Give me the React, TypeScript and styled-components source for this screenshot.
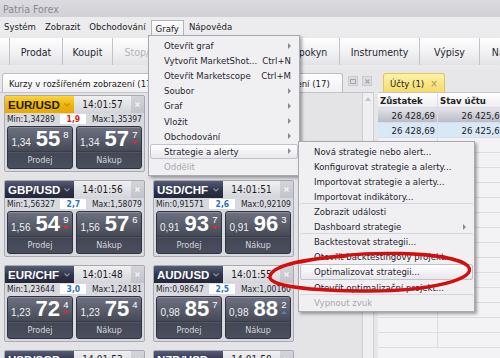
import React from "react";
import styled, { createGlobalStyle } from "styled-components";

const UI = `"DejaVu Sans Condensed", "Liberation Sans", sans-serif`;
const NUM = `"Liberation Sans", Arial, sans-serif`;

const GlobalStyle = createGlobalStyle`
  html, body { margin: 0; padding: 0; background: #e7e7ea; }
  body { font-family: ${UI}; color: #222; }
  * { box-sizing: border-box; }
`;

const Window = styled.div`
  position: relative;
  width: 500px;
  height: 358px;
  overflow: hidden;
  display: flex;
  flex-direction: column;
  background: #e7e7ea;
`;

const TitleBar = styled.div`
  flex: none;
  height: 17px;
  display: flex;
  align-items: center;
  padding-left: 3px;
  background: linear-gradient(#dcdce0, #d0d0d5);
  color: #8a8a97;
  font-size: 10.5px;
`;

const MenuBar = styled.div`
  position: relative;
  z-index: 5;
  flex: none;
  height: 19px;
  display: flex;
  background: #ececee;
  font-size: 9.5px;
`;

const MenuTitle = styled.div<{ $open?: boolean }>`
  display: flex;
  align-items: center;
  padding: 0 4px;
  margin-right: 1px;
  ${(p) =>
    p.$open &&
    `
    margin-top: 3px;
    background: linear-gradient(#fcfcfc, #f0f0f2);
    border: 1px solid #b4b4bd;
    border-bottom: none;
  `}
`;

const Dropdown = styled.div<{ $left: number; $top: number; $width: number }>`
  position: absolute;
  left: ${(p) => p.$left}px;
  top: ${(p) => p.$top}px;
  width: ${(p) => p.$width}px;
  padding: 2px 0 1px;
  background: #f0f0f2;
  border: 1px solid #a9a9b3;
  box-shadow: 2px 2px 3px rgba(0, 0, 0, 0.35);
  font-size: 9.5px;
`;

const Item = styled.div<{ $hot?: boolean; $off?: boolean; $sep?: boolean }>`
  position: relative;
  height: 15.1px;
  display: flex;
  align-items: center;
  justify-content: space-between;
  padding: 0 6px 0 13px;
  margin: 0 1px;
  color: ${(p) => (p.$off ? "#a8a8b0" : "#262630")};
  border: 1px solid transparent;
  border-radius: 2px;
  white-space: nowrap;
  ${(p) => p.$sep && `box-shadow: 0 -1px 0 #d6d6dc;`}
  ${(p) =>
    p.$hot &&
    `
    background: linear-gradient(#ffffff, #e7e7ec);
    border-color: #c2c2cb;
  `}
`;

const Arrow = styled.span`
  width: 0;
  height: 0;
  border-top: 3px solid transparent;
  border-bottom: 3px solid transparent;
  border-left: 3px solid #8a8a94;
`;

const Shortcut = styled.span`
  color: #262630;
`;

const Toolbar = styled.div`
  flex: none;
  height: 34px;
  display: flex;
  padding: 2px 0 5px;
  background: #e9e9ec;
`;

const ToolButton = styled.div<{ $w: number; $off?: boolean }>`
  flex: none;
  width: ${(p) => p.$w}px;
  display: flex;
  align-items: center;
  justify-content: center;
  border-right: 1px solid #c3c3ca;
  background: linear-gradient(#fefefe, #f1f1f3 55%, #e3e3e7);
  color: ${(p) => (p.$off ? "#b2b2ba" : "#262630")};
  font-size: 10.5px;
  white-space: nowrap;
`;

const Workspace = styled.div`
  flex: 1;
  min-height: 0;
  display: flex;
`;

const LeftPanel = styled.div`
  flex: none;
  width: 374px;
  display: flex;
  flex-direction: column;
`;

const RightPanel = styled.div`
  flex: 1;
  margin-left: 4px;
  display: flex;
  flex-direction: column;
  min-width: 0;
`;

const TabStrip = styled.div<{ $pad: number }>`
  flex: none;
  height: 23px;
  display: flex;
  align-items: flex-end;
  padding-left: ${(p) => p.$pad}px;
  border-bottom: 1px solid #c4c4cb;
`;

const Tab = styled.div<{ $w?: number; $yellow?: boolean }>`
  height: 19px;
  ${(p) => (p.$w ? `width: ${p.$w}px;` : "")}
  display: flex;
  align-items: center;
  gap: 6px;
  padding: 0 6px;
  margin-right: 2px;
  border: 1px solid ${(p) => (p.$yellow ? "#e3c65a" : "#bcbcc4")};
  border-bottom: none;
  border-radius: 3px 3px 0 0;
  background: ${(p) =>
    p.$yellow
      ? "linear-gradient(#fdf2a8, #f6da68)"
      : "linear-gradient(#ffffff, #f0f0f3)"};
  font-size: 9.5px;
  white-space: nowrap;
  overflow: hidden;
`;

const TabClose = styled.span`
  color: #a89a60;
  font-size: 10px;
`;

const WinButtons = styled.div`
  margin-left: auto;
  align-self: center;
  display: flex;
  gap: 4px;
  padding-right: 2px;
`;

const WinButton = styled.div`
  width: 10px;
  height: 10px;
  display: flex;
  align-items: center;
  justify-content: center;
  background: #dcdce0;
  border: 1px solid #cacad0;
`;

const PanelBody = styled.div`
  flex: 1;
  min-height: 0;
  display: flex;
  background: #e4e4e7;
`;

const TileGrid = styled.div`
  flex: 1;
  display: grid;
  grid-template-columns: 141px 141px;
  grid-auto-rows: 77px;
  gap: 8px;
  padding: 2px 0 0 4px;
  align-content: start;
`;

const Scrollbar = styled.div`
  flex: none;
  width: 12px;
  display: flex;
  justify-content: center;
  padding-top: 4px;
  background: #efeff1;
  border-left: 1px solid #cfcfd5;
  border-right: 1px solid #cfcfd5;
`;

const UpArrow = styled.span`
  width: 0;
  height: 0;
  border-left: 3px solid transparent;
  border-right: 3px solid transparent;
  border-bottom: 4px solid #c4c4cc;
`;

const Tile = styled.div`
  display: flex;
  flex-direction: column;
  border: 1px solid #a8a9b3;
  border-radius: 2px;
  background: #d8d9de;
  overflow: hidden;
`;

const TileHead = styled.div`
  flex: none;
  height: 17px;
  display: flex;
`;

const Pair = styled.div<{ $active?: boolean }>`
  width: 69px;
  display: flex;
  align-items: center;
  justify-content: space-between;
  padding: 0 4px 0 3px;
  background: ${(p) =>
    p.$active
      ? "linear-gradient(#fcd535, #eeb307 55%, #e7a900)"
      : "linear-gradient(#575c77, #2f3349 55%, #24273b)"};
  color: ${(p) => (p.$active ? "#1c1c1c" : "#ffffff")};
  font-family: ${NUM};
  font-weight: bold;
  font-size: 11.5px;
`;

const Time = styled.div`
  flex: 1;
  display: flex;
  align-items: center;
  justify-content: center;
  background: linear-gradient(#f0f0f2, #d4d5da);
  font-size: 10px;
  color: #1e1e24;
`;

const TileClose = styled.div`
  width: 13px;
  display: flex;
  align-items: center;
  justify-content: center;
  background: linear-gradient(#d4d5da, #c2c3ca);
`;

const Range = styled.div`
  flex: none;
  height: 12px;
  display: flex;
  align-items: center;
  justify-content: space-between;
  padding: 0 2px;
  font-size: 8.5px;
  color: #23232a;
`;

const Spread = styled.span<{ $red?: boolean }>`
  width: 26px;
  height: 10px;
  line-height: 10px;
  text-align: center;
  background: #ffffff;
  color: ${(p) => (p.$red ? "#d42020" : "#2a72c8")};
  font-weight: bold;
`;

const Quotes = styled.div`
  flex: 1;
  display: flex;
  gap: 3px;
  padding: 1px 2px 2px;
`;

const Quote = styled.div`
  flex: 1;
  display: flex;
  flex-direction: column;
  border: 1px solid #30323d;
  border-radius: 3px;
  background: linear-gradient(#6e7181, #50535f 45%, #434654 62%, #4b4e5c);
  box-shadow: inset 0 1px 0 rgba(255, 255, 255, 0.22);
`;

const PriceRow = styled.div`
  flex: none;
  height: 24px;
  display: flex;
  align-items: baseline;
  justify-content: center;
  padding-top: 1px;
  color: #ffffff;
  font-family: ${NUM};
`;

const Prefix = styled.span`
  font-size: 10px;
  margin-right: 5px;
  color: #eceef4;
`;

const Big = styled.span`
  font-size: 22px;
  line-height: 22px;
  font-weight: bold;
`;

const Pip = styled.span`
  align-self: flex-start;
  display: flex;
  flex-direction: column;
  align-items: center;
  margin-left: 3px;
  margin-top: 2px;
  font-size: 9.5px;
  line-height: 9px;
  gap: 2px;
`;

const Tick = styled.span<{ $dir: "up" | "down" }>`
  width: 0;
  height: 0;
  border-left: 3px solid transparent;
  border-right: 3px solid transparent;
  ${(p) =>
    p.$dir === "down"
      ? "border-top: 3px solid #e82a2a;"
      : "border-bottom: 3px solid #3c8de0;"}
`;

const QuoteLabel = styled.div`
  flex: 1;
  display: flex;
  align-items: center;
  justify-content: center;
  border-top: 1px solid #3a3c48;
  box-shadow: inset 0 1px 0 rgba(255, 255, 255, 0.08);
  color: #d4d6de;
  font-size: 9px;
`;

const Table = styled.div`
  flex: 1;
  background: #f3f3f5;
  font-size: 9.5px;
  overflow: hidden;
`;

const Row = styled.div<{ $kind?: "head" | "sel" | "blue" | "empty" }>`
  height: 15px;
  display: flex;
  border-bottom: 1px solid #dcdce2;
  background: ${(p) =>
    p.$kind === "head"
      ? "linear-gradient(#ffffff, #eeeef1)"
      : p.$kind === "sel"
      ? "linear-gradient(#e2e3e8, #b9bbc7)"
      : p.$kind === "blue"
      ? "#d7e8f7"
      : "#f3f3f5"};
  font-weight: ${(p) => (p.$kind === "head" ? "bold" : "normal")};
`;

const Cell = styled.div<{ $w: number; $right?: boolean }>`
  flex: none;
  width: ${(p) => p.$w}px;
  display: flex;
  align-items: center;
  justify-content: ${(p) => (p.$right ? "flex-end" : "flex-start")};
  padding: 0 2px;
  border-right: 1px solid #dcdce2;
  white-space: nowrap;
`;

const Annotation = styled.svg`
  position: absolute;
  inset: 0;
  z-index: 20;
  pointer-events: none;
`;

const XMark = ({ color = "#f4f4f6", size = 5 }: { color?: string; size?: number }) => (
  <svg width={size} height={size} viewBox="0 0 5 5">
    <path d="M0.5 0.5 L4.5 4.5 M4.5 0.5 L0.5 4.5" stroke={color} strokeWidth="1.2" />
  </svg>
);

const Chevron = ({ color }: { color: string }) => (
  <svg width="6" height="4" viewBox="0 0 6 4">
    <path d="M0.5 0.5 L3 3 L5.5 0.5" stroke={color} strokeWidth="1.1" fill="none" />
  </svg>
);

type Side = { pre: string; big: string; pip: string; tick?: "up" | "down" };
type Rate = {
  pair: string;
  time: string;
  min: string;
  max: string;
  spread: string;
  red?: boolean;
  active?: boolean;
  sell: Side;
  buy: Side;
};

const rates: Rate[] = [
  {
    pair: "EUR/USD", time: "14:01:57", min: "1,34289", max: "1,35397", spread: "1,9", red: true, active: true,
    sell: { pre: "1,34", big: "55", pip: "8" },
    buy: { pre: "1,34", big: "57", pip: "7", tick: "down" },
  },
  {
    pair: "USD/JPY", time: "14:01:57", min: "93,412", max: "94,170", spread: "2,0",
    sell: { pre: "93,", big: "85", pip: "1" },
    buy: { pre: "93,", big: "87", pip: "1" },
  },
  {
    pair: "GBP/USD", time: "14:01:56", min: "1,56327", max: "1,58079", spread: "2,7",
    sell: { pre: "1,56", big: "54", pip: "9", tick: "down" },
    buy: { pre: "1,56", big: "57", pip: "6" },
  },
  {
    pair: "USD/CHF", time: "14:01:51", min: "0,91571", max: "0,92109", spread: "2,6",
    sell: { pre: "0,91", big: "93", pip: "7", tick: "down" },
    buy: { pre: "0,91", big: "96", pip: "3" },
  },
  {
    pair: "EUR/CHF", time: "14:01:48", min: "1,23644", max: "1,24181", spread: "3,0",
    sell: { pre: "1,23", big: "72", pip: "4", tick: "down" },
    buy: { pre: "1,23", big: "75", pip: "4" },
  },
  {
    pair: "AUD/USD", time: "14:01:55", min: "0,98647", max: "1,00160", spread: "2,5",
    sell: { pre: "0,98", big: "85", pip: "7" },
    buy: { pre: "0,98", big: "88", pip: "2", tick: "up" },
  },
  {
    pair: "USD/SGD", time: "14:01:53", min: "1,23911", max: "1,24460", spread: "3,1",
    sell: { pre: "1,24", big: "10", pip: "2" },
    buy: { pre: "1,24", big: "13", pip: "3" },
  },
  {
    pair: "NZD/USD", time: "14:01:50", min: "0,79208", max: "0,80011", spread: "3,4",
    sell: { pre: "0,79", big: "70", pip: "5" },
    buy: { pre: "0,79", big: "73", pip: "9" },
  },
];

const QuoteButton = ({ side, label }: { side: Side; label: string }) => (
  <Quote>
    <PriceRow>
      <Prefix>{side.pre}</Prefix>
      <Big>{side.big}</Big>
      <Pip>
        {side.pip}
        {side.tick && <Tick $dir={side.tick} />}
      </Pip>
    </PriceRow>
    <QuoteLabel>{label}</QuoteLabel>
  </Quote>
);

const RateTile = ({ r }: { r: Rate }) => (
  <Tile>
    <TileHead>
      <Pair $active={r.active}>
        {r.pair}
        <Chevron color={r.active ? "#b88a10" : "#8f93a6"} />
      </Pair>
      <Time>{r.time}</Time>
      <TileClose>
        <XMark />
      </TileClose>
    </TileHead>
    <Range>
      <span>Min:{r.min}</span>
      <Spread $red={r.red}>{r.spread}</Spread>
      <span>Max:{r.max}</span>
    </Range>
    <Quotes>
      <QuoteButton side={r.sell} label="Prodej" />
      <QuoteButton side={r.buy} label="Nákup" />
    </Quotes>
  </Tile>
);

const grafyItems = [
  { t: "Otevřít graf", sub: true },
  { t: "Vytvořit MarketShot...", key: "Ctrl+N" },
  { t: "Otevřít Marketscope", key: "Ctrl+M" },
  { t: "Soubor", sub: true },
  { t: "Graf", sub: true },
  { t: "Vložit", sub: true },
  { t: "Obchodování", sub: true },
  { t: "Strategie a alerty", sub: true, hot: true },
  { t: "Oddělit", off: true },
];

const strategyItems = [
  { t: "Nová strategie nebo alert..." },
  { t: "Konfigurovat strategie a alerty..." },
  { t: "Importovat strategie a alerty..." },
  { t: "Importovat indikátory..." },
  { t: "Zobrazit události", sep: true },
  { t: "Dashboard strategie", sub: true },
  { t: "Backtestovat strategii...", sep: true },
  { t: "Otevřít backtestingový projekt..." },
  { t: "Optimalizovat strategii...", hot: true },
  { t: "Otevřít optimalizační projekt..." },
  { t: "Vypnout zvuk", off: true, sep: true },
];

const emptyRows = Array.from({ length: 14 });

export default function App() {
  return (
    <>
      <GlobalStyle />
      <Window>
        <TitleBar>Patria Forex</TitleBar>
        <MenuBar>
          <MenuTitle>Systém</MenuTitle>
          <MenuTitle>Zobrazit</MenuTitle>
          <MenuTitle>Obchodování</MenuTitle>
          <MenuTitle $open>Grafy</MenuTitle>
          <MenuTitle>Nápověda</MenuTitle>

          <Dropdown $left={148} $top={18} $width={152}>
            {grafyItems.map((it) => (
              <Item key={it.t} $hot={it.hot} $off={it.off}>
                <span>{it.t}</span>
                {it.key && <Shortcut>{it.key}</Shortcut>}
                {it.sub && <Arrow />}
                {it.hot && (
                  <Dropdown $left={147} $top={-4} $width={177}>
                    {strategyItems.map((s) => (
                      <Item key={s.t} $hot={s.hot} $off={s.off} $sep={s.sep}>
                        <span>{s.t}</span>
                        {s.sub && <Arrow />}
                      </Item>
                    ))}
                  </Dropdown>
                )}
              </Item>
            ))}
          </Dropdown>
        </MenuBar>

        <Toolbar>
          <ToolButton $w={10} />
          <ToolButton $w={53}>Prodat</ToolButton>
          <ToolButton $w={50}>Koupit</ToolButton>
          <ToolButton $w={72} $off>
            Stop/Limit
          </ToolButton>
          <ToolButton $w={75}>OCO</ToolButton>
          <ToolButton $w={80}>Nový pokyn</ToolButton>
          <ToolButton $w={80}>Instrumenty</ToolButton>
          <ToolButton $w={60}>Výpisy</ToolButton>
          <ToolButton $w={72}>Nastavení</ToolButton>
        </Toolbar>

        <Workspace>
          <LeftPanel>
            <TabStrip $pad={2}>
              <Tab $w={162}>Kurzy v rozšířeném zobrazení (17)</Tab>
              <Tab $w={177}>Kurzy v jednoduchém zobrazení (17)</Tab>
              <WinButtons>
                <WinButton>
                  <svg width="6" height="5" viewBox="0 0 6 5">
                    <rect x="0.5" y="0.5" width="5" height="4" fill="none" stroke="#a6a6ae" />
                  </svg>
                </WinButton>
                <WinButton>
                  <XMark color="#a6a6ae" />
                </WinButton>
              </WinButtons>
            </TabStrip>
            <PanelBody>
              <TileGrid>
                {rates.map((r) => (
                  <RateTile key={r.pair} r={r} />
                ))}
              </TileGrid>
              <Scrollbar>
                <UpArrow />
              </Scrollbar>
            </PanelBody>
          </LeftPanel>

          <RightPanel>
            <TabStrip $pad={5}>
              <Tab $yellow>
                Účty (1)
                <TabClose>×</TabClose>
              </Tab>
            </TabStrip>
            <Table>
              <Row $kind="head">
                <Cell $w={60}>Zůstatek</Cell>
                <Cell $w={70}>Stav účtu</Cell>
              </Row>
              <Row $kind="sel">
                <Cell $w={60} $right>
                  26 428,69
                </Cell>
                <Cell $w={70} $right>
                  26 425,69
                </Cell>
              </Row>
              <Row $kind="blue">
                <Cell $w={60} $right>
                  26 428,69
                </Cell>
                <Cell $w={70} $right>
                  26 425,69
                </Cell>
              </Row>
              {emptyRows.map((_, i) => (
                <Row key={i} $kind="empty">
                  <Cell $w={60} />
                  <Cell $w={70} />
                </Row>
              ))}
            </Table>
          </RightPanel>
        </Workspace>

        <Annotation width="500" height="358" viewBox="0 0 500 358">
          <path
            d="M300 262 C360 249 452 251 468 266 C479 279 430 291 370 291 C309 291 267 286 270 276 C273 266 302 259 346 256"
            fill="none"
            stroke="#d40d0d"
            strokeWidth="3.4"
            strokeLinecap="round"
          />
        </Annotation>
      </Window>
    </>
  );
}
